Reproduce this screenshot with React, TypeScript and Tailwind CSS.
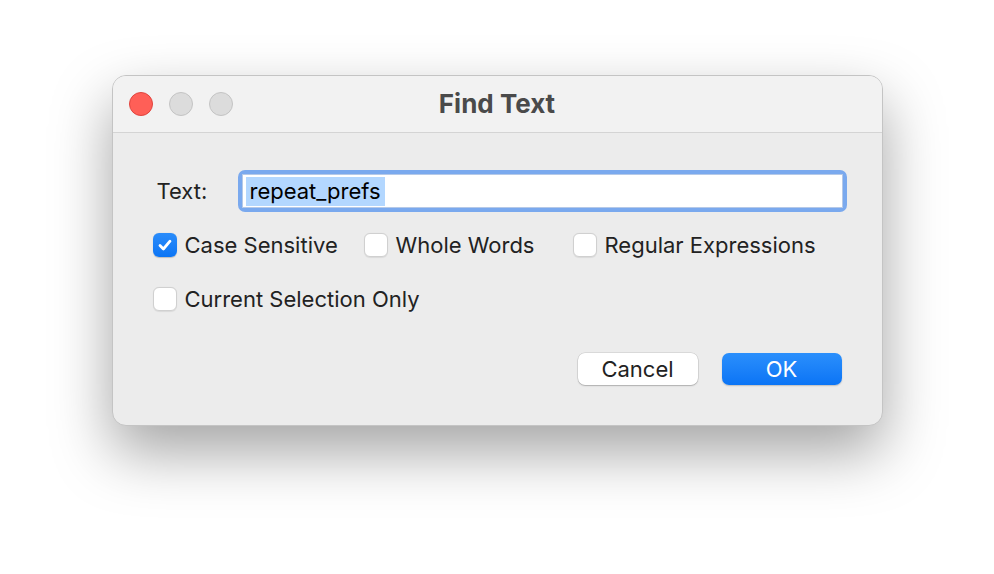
import React from "react";

const Checkbox = ({ checked, label }: { checked?: boolean; label: string }) => (
  <label className="flex h-6 items-center gap-[8px] leading-6">
    {checked ? (
      <span className="flex h-6 w-6 items-center justify-center rounded-[6px] bg-gradient-to-b from-[#2a8cfa] to-[#0a75f5] shadow-[0_0.5px_1px_rgba(0,0,0,0.2)]">
        <svg width="16" height="16" viewBox="0 0 16 16" fill="none">
          <path
            d="M3 8.6 L6.4 12 L13 4.2"
            stroke="white"
            strokeWidth="2.8"
            strokeLinecap="round"
            strokeLinejoin="round"
          />
        </svg>
      </span>
    ) : (
      <span className="h-6 w-6 rounded-[6px] border border-[#d0d0d0] bg-white shadow-[0_0.5px_1px_rgba(0,0,0,0.08)]" />
    )}
    <span>{label}</span>
  </label>
);

export default function App() {
  return (
    <div
      className="flex min-h-[574px] w-full justify-center bg-white pt-[75px] text-[22px] text-[#222222]"
      style={{ fontFamily: "Inter, 'Noto Sans', sans-serif" }}
    >
      <div className="flex h-[351px] w-[771px] flex-col overflow-hidden rounded-[14px] border border-[#c4c4c4] bg-[#ececec] shadow-[0_26px_60px_rgba(0,0,0,0.36)]">
        {/* Title bar */}
        <div className="relative flex h-[57px] items-center border-b border-[#d4d4d4] bg-[#f2f2f2] px-[16px]">
          <div className="flex gap-[16px]">
            <span className="h-6 w-6 rounded-full border border-[#e0443e] bg-[#ff5f57]" />
            <span className="h-6 w-6 rounded-full border border-[#c4c4c4] bg-[#dcdcdc]" />
            <span className="h-6 w-6 rounded-full border border-[#c4c4c4] bg-[#dcdcdc]" />
          </div>
          <div className="absolute inset-0 flex items-center justify-center pb-[2px] text-[26px] font-bold text-[#4a4a4a]">
            Find Text
          </div>
        </div>

        {/* Body */}
        <div className="flex flex-1 flex-col pl-[40px] pr-[35px] pt-[37px]">
          <div className="flex items-center">
            <span className="w-[85px] pl-[4px]">Text:</span>
            <div className="flex-1 rounded-[7px] bg-[#7aa9ee] p-[4px]">
              <div className="flex h-[34px] items-center border border-[#b5c9e8] bg-white pl-[3px]">
                <span className="bg-[#b3d7ff] px-[4px] leading-[29px] text-black">repeat_prefs</span>
              </div>
            </div>
          </div>

          <div className="mt-[21px] flex items-center">
            <div className="w-[211px]">
              <Checkbox checked label="Case Sensitive" />
            </div>
            <div className="w-[209px]">
              <Checkbox label="Whole Words" />
            </div>
            <Checkbox label="Regular Expressions" />
          </div>

          <div className="mt-[30px] flex items-center">
            <Checkbox label="Current Selection Only" />
          </div>

          <div className="mt-[42px] flex justify-end gap-[24px] pr-[5px]">
            <button className="h-[32px] w-[120px] rounded-[7px] bg-white text-[#222222] shadow-[0_0_0_0.5px_rgba(0,0,0,0.15),0_1px_1.5px_rgba(0,0,0,0.2)]">
              Cancel
            </button>
            <button className="h-[32px] w-[120px] rounded-[7px] bg-gradient-to-b from-[#2a8ffc] to-[#0a74f5] text-white shadow-[0_1px_1.5px_rgba(0,0,0,0.2)]">
              OK
            </button>
          </div>
        </div>
      </div>
    </div>
  );
}
